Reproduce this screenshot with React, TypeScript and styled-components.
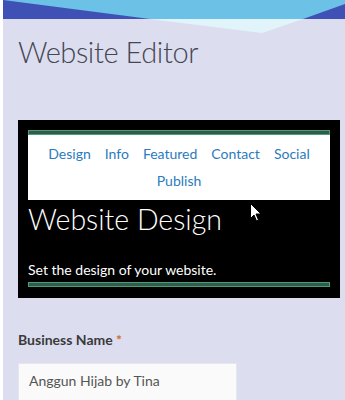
import React from "react";
import styled, { createGlobalStyle } from "styled-components";

const Global = createGlobalStyle`
  html, body { margin: 0; padding: 0; background: #ffffff; }
  body { font-family: Lato, "Open Sans", sans-serif; }
`;

const Page = styled.div`
  margin-left: 3px;
  min-height: 400px;
  background: #dcdef0;
  overflow: hidden;
`;

const Header = styled.header`
  position: relative;
  height: 120px;
`;

const Banner = styled.svg`
  position: absolute;
  left: 0;
  top: 0;
  display: block;
`;

const Title = styled.h1`
  position: relative;
  margin: 0;
  padding: 32px 0 0 15px;
  font-family: Lato, sans-serif;
  font-weight: 300;
  font-size: 29px;
  line-height: 40px;
  letter-spacing: -0.4px;
  color: #444652;
`;

const Panel = styled.section`
  position: relative;
  margin-left: 15px;
  width: 302px;
  padding: 10px 10px 11px;
  background: #000000;
`;

const Rule = styled.div`
  height: 3px;
  border: 1px solid #4f9a7c;
  background: #2c5e4a;
`;

const Nav = styled.nav`
  display: flex;
  flex-wrap: wrap;
  justify-content: center;
  padding: 5px 10px 6px;
  background: #ffffff;
`;

const NavLink = styled.a`
  padding: 0 7px;
  font-size: 14px;
  line-height: 27px;
  color: #2b7bbd;
  text-decoration: none;
`;

const PanelTitle = styled.h2`
  margin: 0;
  font-family: Lato, sans-serif;
  font-weight: 300;
  font-size: 28.5px;
  line-height: 38px;
  color: #ffffff;
`;

const PanelText = styled.p`
  margin: 22px 0 2px;
  font-size: 14px;
  line-height: 20px;
  color: #ffffff;
`;

const Cursor = styled.svg`
  position: absolute;
  left: 232px;
  top: 83px;
`;

const Field = styled.div`
  padding: 32px 0 0 15px;
`;

const Label = styled.label`
  display: block;
  font-size: 14px;
  font-weight: 700;
  line-height: 20px;
  color: #3a3a3a;
`;

const Required = styled.span`
  color: #d2691e;
`;

const Input = styled.div`
  margin-top: 13px;
  width: 197px;
  height: 38px;
  padding: 0 10px;
  border: 1px solid #e6e6ee;
  background: #fafafa;
  font-size: 14px;
  line-height: 34px;
  color: #555555;
`;

const links = ["Design", "Info", "Featured", "Contact", "Social", "Publish"];

export default function App() {
  return (
    <>
      <Global />
      <Page>
        <Header>
          <Banner width="342" height="34" viewBox="0 0 342 34">
            <rect x="0" y="0" width="342" height="19" fill="#6bc1e6" />
            <polygon points="0,0 147,19 0,19" fill="#3f51b5" />
            <polygon points="300,19 342,4 342,19" fill="#3f51b5" />
            <polygon points="147,19 259,33 300,19" fill="#e1f4fa" />
          </Banner>
          <Title>Website Editor</Title>
        </Header>
        <Panel>
          <Rule />
          <Nav>
            {links.map((l) => (
              <NavLink key={l} href="#">
                {l}
              </NavLink>
            ))}
          </Nav>
          <PanelTitle>Website Design</PanelTitle>
          <PanelText>Set the design of your website.</PanelText>
          <Rule />
          <Cursor width="12" height="19" viewBox="0 0 12 19">
            <path d="M0.5 0.5 L0.5 15.5 L4 12 L6.5 18 L8.5 17 L6 11 L11 11 Z" fill="#ffffff" stroke="#000000" strokeWidth="1" />
          </Cursor>
        </Panel>
        <Field>
          <Label>
            Business Name <Required>*</Required>
          </Label>
          <Input>Anggun Hijab by Tina</Input>
        </Field>
      </Page>
    </>
  );
}
